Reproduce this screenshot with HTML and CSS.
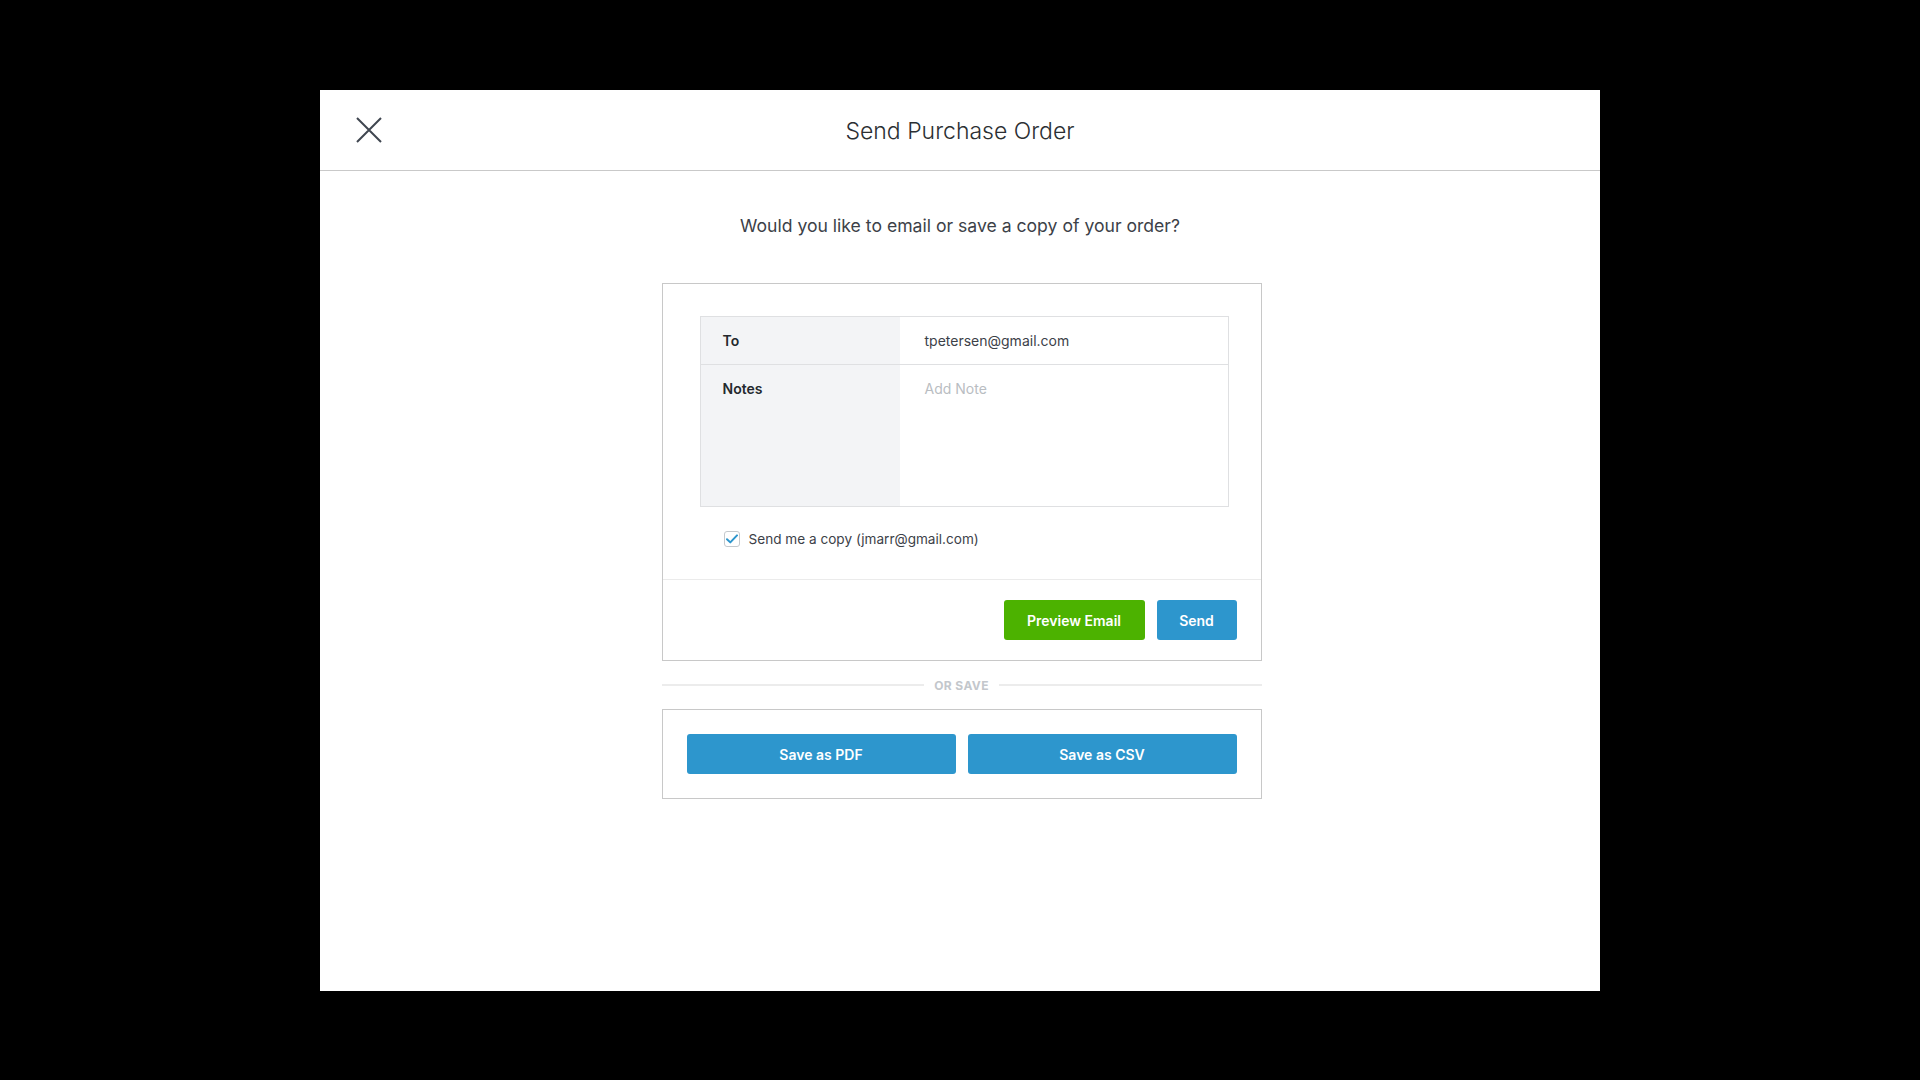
FILE: index.html
```html
<!DOCTYPE html>
<html>
<head>
<meta charset="utf-8">
<link rel="stylesheet" href="styles.css">
</head>
<body>
<div class="stage">
  <div class="modal">
    <header class="modal-header">
      <div class="close-cell">
        <svg class="close-icon" width="26" height="26" viewBox="0 0 26 26"><path d="M1 1 L25 25 M25 1 L1 25" stroke="#3f4650" stroke-width="2" fill="none"/></svg>
      </div>
      <h1 class="title">Send Purchase Order</h1>
      <div></div>
    </header>
    <div class="modal-body">
      <p class="subtitle">Would you like to email or save a copy of your order?</p>
      <section class="card email-card">
        <div class="email-main">
          <div class="fields">
            <div class="field-row">
              <div class="field-label">To</div>
              <div class="field-value">tpetersen@gmail.com</div>
            </div>
            <div class="field-row notes-row">
              <div class="field-label">Notes</div>
              <div class="field-value placeholder">Add Note</div>
            </div>
          </div>
          <label class="copy-row">
            <span class="checkbox"><svg width="12" height="10" viewBox="0 0 12 10"><path d="M1 5.2 L4.3 8.4 L11 1.4" stroke="#2d96cd" stroke-width="2" fill="none" stroke-linecap="round" stroke-linejoin="round"/></svg></span>
            <span class="copy-text">Send me a copy (jmarr@gmail.com)</span>
          </label>
        </div>
        <div class="email-footer">
          <button class="btn btn-green">Preview Email</button>
          <button class="btn btn-blue btn-send">Send</button>
        </div>
      </section>
      <div class="or-save">
        <span class="or-line"></span>
        <span class="or-text">OR SAVE</span>
        <span class="or-line"></span>
      </div>
      <section class="card save-card">
        <button class="btn btn-blue btn-wide">Save as PDF</button>
        <button class="btn btn-blue btn-wide">Save as CSV</button>
      </section>
    </div>
  </div>
</div>
</body>
</html>
```

FILE: styles.css
```css
* { box-sizing: border-box; }
html, body {
  margin: 0;
  padding: 0;
  background: #000;
}
body {
  font-family: Inter, "Liberation Sans", sans-serif;
  color: #3c4148;
}
.stage {
  width: 1920px;
  height: 1080px;
  padding-top: 90px;
}
.modal {
  width: 1280px;
  height: 901px;
  margin: 0 auto;
  background: #fff;
}
.modal-header {
  height: 81px;
  border-bottom: 1px solid #c9c9c9;
  display: grid;
  grid-template-columns: 1fr auto 1fr;
  align-items: center;
}
.close-cell {
  padding-left: 36px;
  display: flex;
  align-items: center;
}
.close-icon { display: block; }
.title {
  margin: 0;
  padding-top: 2px;
  font-size: 23px;
  font-weight: 300;
  color: #2b2f33;
  line-height: 30px;
}
.modal-body {
  display: flex;
  flex-direction: column;
  align-items: center;
}
.subtitle {
  margin: 43px 0 0;
  font-size: 17.6px;
  line-height: 24px;
  color: #3c4148;
}
.card {
  width: 600px;
  border: 1px solid #c8c8c8;
  margin-left: 3px;
}
.email-card {
  margin-top: 45px;
}
.email-main {
  padding: 32px 32px 0 37px;
}
.fields {
  border: 1px solid #dfe0e2;
}
.field-row {
  display: flex;
  height: 47px;
}
.field-row + .field-row {
  border-top: 1px solid #dfe0e2;
}
.notes-row { height: 142px; }
.field-label {
  width: 199px;
  background: #f3f4f6;
  padding: 14px 22px;
  font-size: 14px;
  line-height: 19px;
  font-weight: 600;
  color: #24292e;
}
.field-value {
  flex: 1;
  padding: 14px 25px;
  font-size: 14px;
  line-height: 19px;
  color: #3c4148;
}
.placeholder { color: #b9bdc2; }
.copy-row {
  display: flex;
  align-items: center;
  gap: 9px;
  padding: 24px 0 32px 24px;
}
.checkbox {
  width: 16px;
  height: 16px;
  border: 1px solid #c5c9cd;
  border-radius: 3px;
  display: flex;
  align-items: center;
  justify-content: center;
}
.checkbox svg { display: block; }
.copy-text {
  font-size: 13.6px;
  line-height: 16px;
  color: #3c4148;
}
.email-footer {
  border-top: 1px solid #ebebeb;
  padding: 20px 24px 20px;
  display: flex;
  justify-content: flex-end;
  gap: 12px;
}
.btn {
  height: 40px;
  border: none;
  border-radius: 3px;
  font-family: Inter, "Liberation Sans", sans-serif;
  font-size: 14px;
  font-weight: 600;
  color: #fff;
  padding: 0;
}
.btn-green {
  background: #4cb200;
  width: 141px;
}
.btn-blue { background: #2d96cd; }
.btn-send { width: 80px; }
.or-save {
  width: 600px;
  margin-left: 3px;
  height: 48px;
  display: flex;
  align-items: center;
  gap: 10px;
}
.or-line {
  flex: 1;
  height: 2px;
  background: #ececec;
}
.or-text {
  font-size: 12px;
  font-weight: 700;
  color: #c3c7cc;
  letter-spacing: 0.4px;
}
.save-card {
  padding: 24px 24px 24px;
  display: flex;
  gap: 12px;
}
.btn-wide { flex: 1; }
```
